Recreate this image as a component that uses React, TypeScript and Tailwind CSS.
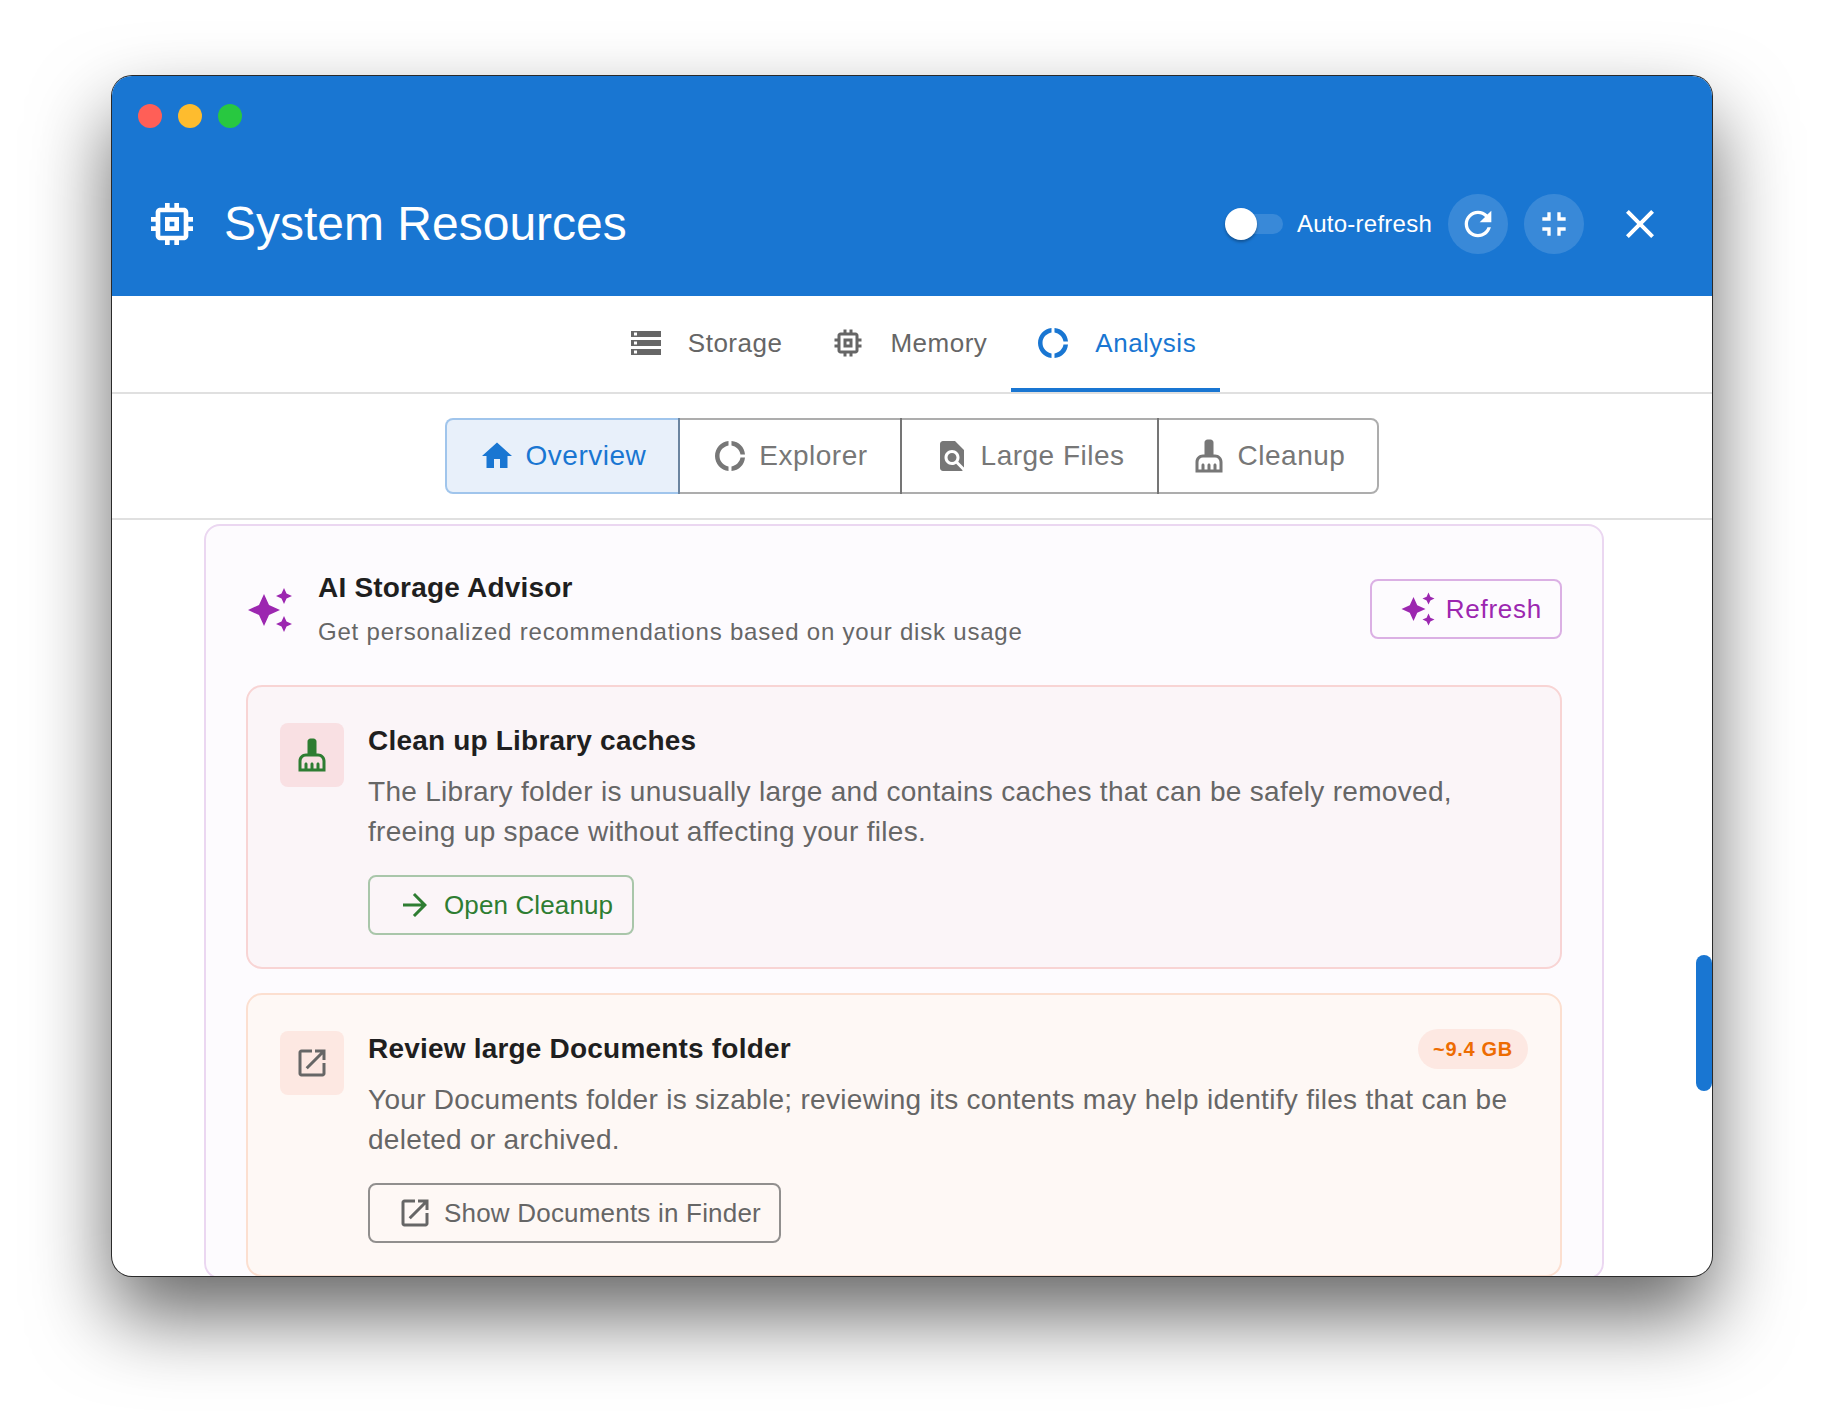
const paths = {
  memory:
    "M15 9H9v6h6V9zm-2 4h-2v-2h2v2zm8-2V9h-2V7c0-1.1-.9-2-2-2h-2V3h-2v2h-2V3H9v2H7c-1.1 0-2 .9-2 2v2H3v2h2v2H3v2h2v2c0 1.1.9 2 2 2h2v2h2v-2h2v2h2v-2h2c1.1 0 2-.9 2-2v-2h2v-2h-2v-2h2zm-4 6H7V7h10v10z",
  refresh:
    "M17.65 6.35C16.2 4.9 14.21 4 12 4c-4.42 0-7.99 3.58-7.99 8s3.57 8 7.99 8c3.73 0 6.84-2.55 7.73-6h-2.08c-.82 2.33-3.04 4-5.65 4-3.31 0-6-2.69-6-6s2.69-6 6-6c1.66 0 3.14.69 4.22 1.78L13 11h7V4l-2.35 2.35z",
  fullscreenExit: "M5 16h3v3h2v-5H5v2zm3-8H5v2h5V5H8v3zm6 11h2v-3h3v-2h-5v5zm2-11V5h-2v5h5V8h-3z",
  close:
    "M19 6.41L17.59 5 12 10.59 6.41 5 5 6.41 10.59 12 5 17.59 6.41 19 12 13.41 17.59 19 19 17.59 13.41 12z",
  storage: "M2 20h20v-4H2v4zm2-3h2v2H4v-2zM2 4v4h20V4H2zm4 3H4V5h2v2zm-4 7h20v-4H2v4zm2-3h2v2H4v-2z",
  donut:
    "M11 5.08V2c-5 .5-9 4.76-9 10s4 9.5 9 10v-3.08c-3-.48-6-3.19-6-6.92s3-6.44 6-6.92zM18.97 11H22c-.47-5-4-8.53-9-9v3.08C16 5.51 18.54 8 18.97 11zM13 18.92V22c5-.47 8.53-4 9-9h-3.03c-.43 3-2.97 5.49-5.97 5.92z",
  home: "M10 20v-6h4v6h5v-8h3L12 3 2 12h3v8z",
  findInPage:
    "M20 19.59V8l-6-6H6c-1.1 0-1.99.9-1.99 2L4 20c0 1.1.89 2 1.99 2H18c.45 0 .85-.15 1.19-.4l-4.43-4.43c-.8.52-1.74.83-2.76.83-2.76 0-5-2.24-5-5s2.24-5 5-5 5 2.24 5 5c0 1.02-.31 1.96-.83 2.75L20 19.59zM9 13c0 1.66 1.34 3 3 3s3-1.34 3-3-1.34-3-3-3-3 1.34-3 3z",
  broom:
    "M16 11h-1V3c0-1.1-.9-2-2-2h-2c-1.1 0-2 .9-2 2v8H8c-2.76 0-5 2.24-5 5v7h18v-7c0-2.76-2.24-5-5-5zm3 10h-2v-3c0-.55-.45-1-1-1s-1 .45-1 1v3h-2v-3c0-.55-.45-1-1-1s-1 .45-1 1v3H9v-3c0-.55-.45-1-1-1s-1 .45-1 1v3H5v-5c0-1.65 1.35-3 3-3h8c1.65 0 3 1.35 3 3v5z",
  sparkle:
    "M19 9l1.25-2.75L23 5l-2.75-1.25L19 1l-1.25 2.75L15 5l2.75 1.25L19 9zm-7.5.5L9 4 6.5 9.5 1 12l5.5 2.5L9 20l2.5-5.5L17 12l-5.5-2.5zM19 15l-1.25 2.75L15 19l2.75 1.25L19 23l1.25-2.75L23 19l-2.75-1.25L19 15z",
  arrow: "M12 4l-1.41 1.41L16.17 11H4v2h12.17l-5.58 5.59L12 20l8-8z",
  openInNew:
    "M19 19H5V5h7V3H5c-1.11 0-2 .9-2 2v14c0 1.1.89 2 2 2h14c1.1 0 2-.9 2-2v-7h-2v7zM14 3v2h3.59l-9.83 9.83 1.41 1.41L19 6.41V10h2V3h-7z",
};

function Icon({ d, className }: { d: string; className?: string }) {
  return (
    <svg viewBox="0 0 24 24" className={`shrink-0 fill-current ${className ?? "h-9 w-9"}`}>
      <path d={d} />
    </svg>
  );
}

function MainTab({ icon, label, active }: { icon: string; label: string; active?: boolean }) {
  return (
    <button
      type="button"
      className={`flex h-[96px] items-center gap-6 border-b-4 px-6 pt-[2px] text-[26px] tracking-[0.5px] ${
        active ? "border-[#1976d2] text-[#1976d2]" : "border-transparent text-[#666666]"
      }`}
    >
      <Icon d={icon} />
      <span>{label}</span>
    </button>
  );
}

function ToggleItem({
  icon,
  label,
  selected,
  className,
}: {
  icon: string;
  label: string;
  selected?: boolean;
  className?: string;
}) {
  return (
    <button
      type="button"
      className={`flex h-[76px] items-center gap-[11px] border-2 px-8 text-[28px] tracking-[0.5px] ${
        selected
          ? "border-[#1976d2]/35 bg-[#e8f0fa] text-[#1976d2]"
          : "-ml-[2px] border-black/[0.32] text-[#777777]"
      } ${className ?? ""}`}
    >
      <Icon d={icon} />
      <span>{label}</span>
    </button>
  );
}

function ActionButton({
  icon,
  label,
  className,
}: {
  icon: string;
  label: string;
  className: string;
}) {
  return (
    <button
      type="button"
      className={`flex h-[60px] items-center rounded-lg border-2 text-[26px] ${className}`}
    >
      <Icon d={icon} />
      <span>{label}</span>
    </button>
  );
}

function AdviceCard({
  icon,
  iconClass,
  cardClass,
  title,
  body,
  chip,
  children,
}: {
  icon: string;
  iconClass: string;
  cardClass: string;
  title: string;
  body: string;
  chip?: string;
  children: React.ReactNode;
}) {
  return (
    <div className={`flex gap-6 rounded-2xl border-2 px-8 pb-8 pt-9 ${cardClass}`}>
      <div className={`flex h-16 w-16 shrink-0 items-center justify-center rounded-lg ${iconClass}`}>
        <Icon d={icon} />
      </div>
      <div className="min-w-0 flex-1">
        <div className="flex h-[35px] items-center justify-between">
          <h3 className="text-[28px] font-bold leading-[35px] tracking-[0.2px] text-[#1f1f1f]">{title}</h3>
          {chip ? (
            <span className="flex h-10 items-center rounded-full bg-[#fde8e2] px-[15px] text-[20px] font-bold tracking-[0.7px] text-[#ed6c02]">
              {chip}
            </span>
          ) : null}
        </div>
        <p className="mb-[23px] mt-[14px] text-[28px] leading-[40px] tracking-[0.3px] text-[#666666]">{body}</p>
        {children}
      </div>
    </div>
  );
}

export default function App() {
  return (
    <div className="h-[1424px] w-[1824px] overflow-hidden bg-white pl-[112px] pt-[76px] font-['Liberation_Sans',Arial,sans-serif]">
      <div className="flex h-[1200px] w-[1600px] flex-col overflow-hidden rounded-[20px] bg-white shadow-[0_0_0_1px_#2a2a2a,0_40px_80px_rgba(0,0,0,0.6)]">
        <header className="h-[220px] shrink-0 bg-[#1976d2] text-white">
          <div className="flex h-[76px] gap-4 pl-[26px] pt-[28px]">
            <span className="h-6 w-6 rounded-full bg-[#ff5f57]" />
            <span className="h-6 w-6 rounded-full bg-[#febc2e]" />
            <span className="h-6 w-6 rounded-full bg-[#28c840]" />
          </div>
          <div className="flex h-[144px] items-center pl-8 pr-[42px]">
            <Icon d={paths.memory} className="h-14 w-14" />
            <h1 className="ml-6 flex-1 text-[48px] leading-[56px]">System Resources</h1>
            <div className="flex items-center">
              <div className="relative ml-[7px] h-5 w-[51px] rounded-full bg-white/[0.14]">
                <span className="absolute -left-[7px] -top-[6px] h-8 w-8 rounded-full bg-white shadow-[0_2px_3px_rgba(0,0,0,0.3)]" />
              </div>
              <span className="ml-[14px] text-[24px] tracking-[0.25px]">Auto-refresh</span>
            </div>
            <button type="button" className="ml-[16px] flex h-[60px] w-[60px] items-center justify-center rounded-full bg-white/[0.14]">
              <Icon d={paths.refresh} className="h-10 w-10" />
            </button>
            <button type="button" className="ml-[16px] flex h-[60px] w-[60px] items-center justify-center rounded-full bg-white/[0.14]">
              <Icon d={paths.fullscreenExit} className="h-10 w-10" />
            </button>
            <button type="button" className="ml-[26px] flex h-[60px] w-[60px] items-center justify-center">
              <Icon d={paths.close} className="h-12 w-12" />
            </button>
          </div>
        </header>

        <nav className="flex shrink-0 justify-center border-b-2 border-[#e0e0e0]">
          <MainTab icon={paths.storage} label="Storage" />
          <MainTab icon={paths.memory} label="Memory" />
          <MainTab icon={paths.donut} label="Analysis" active />
        </nav>

        <div className="flex shrink-0 justify-center border-b-2 border-[#e0e0e0] py-6">
          <ToggleItem icon={paths.home} label="Overview" selected className="rounded-l-lg" />
          <ToggleItem icon={paths.donut} label="Explorer" />
          <ToggleItem icon={paths.findInPage} label="Large Files" />
          <ToggleItem icon={paths.broom} label="Cleanup" className="rounded-r-lg" />
        </div>

        <div className="flex min-h-0 flex-1">
          <main className="min-w-0 flex-1 overflow-hidden pt-1">
            <section className="mx-auto w-[1400px] rounded-2xl border-2 border-[#ebd7f1] bg-[#fdfbfe] px-10 pt-11">
              <div className="flex items-center">
                <span className="text-[#9c27b0]">
                  <Icon d={paths.sparkle} className="h-12 w-12" />
                </span>
                <div className="ml-6 flex-1">
                  <h2 className="text-[28px] font-bold leading-[35px] tracking-[0.2px] text-[#1f1f1f]">AI Storage Advisor</h2>
                  <p className="mt-[9px] text-[24px] leading-[36px] tracking-[0.8px] text-[#666666]">
                    Get personalized recommendations based on your disk usage
                  </p>
                </div>
                <div className="mb-[2px]">
                  <ActionButton
                    icon={paths.sparkle}
                    label="Refresh"
                    className="gap-[10px] border-[#dbb0e4] pl-[28px] pr-[18px] tracking-[0.74px] text-[#9c27b0]"
                  />
                </div>
              </div>

              <div className="mt-[35px] flex flex-col gap-6">
                <AdviceCard
                  icon={paths.broom}
                  iconClass="bg-[#f9e0e3] text-[#2e7d32]"
                  cardClass="border-[#f8d4d4] bg-[#fbf5f8]"
                  title="Clean up Library caches"
                  body="The Library folder is unusually large and contains caches that can be safely removed, freeing up space without affecting your files."
                >
                  <div className="flex">
                    <ActionButton
                      icon={paths.arrow}
                      label="Open Cleanup"
                      className="gap-[11px] border-[#a9c6aa] pl-[27px] pr-[19px] tracking-[0.12px] text-[#2e7d32]"
                    />
                  </div>
                </AdviceCard>
                <AdviceCard
                  icon={paths.openInNew}
                  iconClass="bg-[#fde8e2] text-[#666666]"
                  cardClass="border-[#fcdfd0] bg-[#fef8f5]"
                  title="Review large Documents folder"
                  body="Your Documents folder is sizable; reviewing its contents may help identify files that can be deleted or archived."
                  chip="~9.4 GB"
                >
                  <div className="flex">
                    <ActionButton
                      icon={paths.openInNew}
                      label="Show Documents in Finder"
                      className="gap-[11px] border-[#918f8e] pl-[27px] pr-[18px] tracking-[0.2px] text-[#666666]"
                    />
                  </div>
                </AdviceCard>
              </div>
            </section>
          </main>
          <div className="w-4 shrink-0 pt-[435px]">
            <div className="h-[136px] rounded-full bg-[#1976d2]" />
          </div>
        </div>
      </div>
    </div>
  );
}
